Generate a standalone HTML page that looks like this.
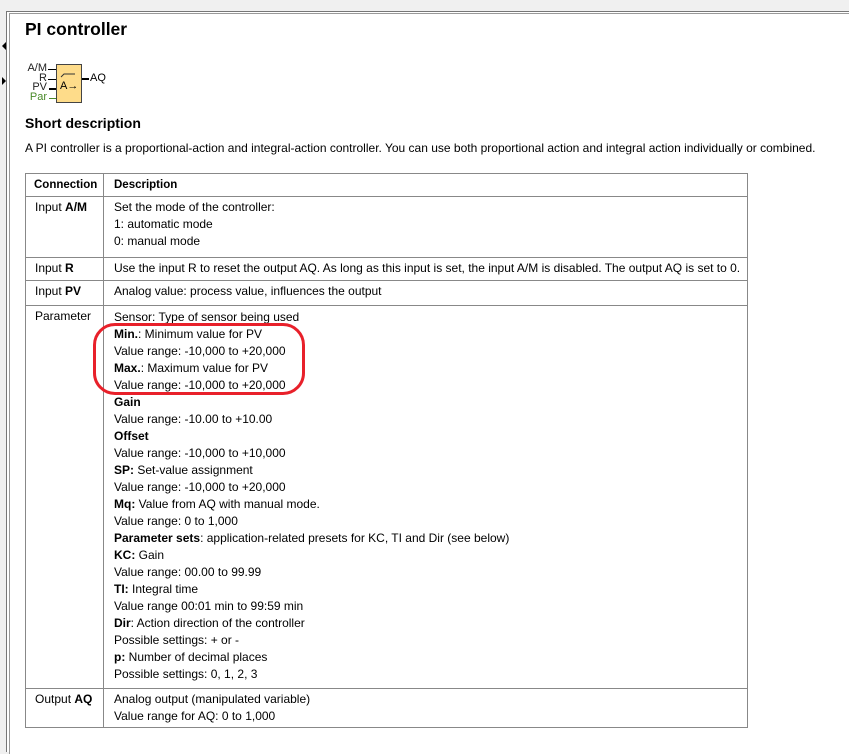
<!DOCTYPE html>
<html><head><meta charset="utf-8"><style>
body{margin:0;width:849px;height:736px;background:#f0f0f0;position:relative;overflow:hidden;font-family:"Liberation Sans",Arial,sans-serif;font-size:12px;color:#000}
#frame{position:absolute;left:6px;top:11px;width:860px;height:740px;border-left:1px solid #777;border-top:1px solid #777;background:#fff}
#inner{position:absolute;left:9px;top:13px;width:860px;height:740px;border-left:1px solid #999;border-top:1px solid #999;background:#fff}
.a{position:absolute;white-space:nowrap}
h1{position:absolute;left:25px;top:19px;margin:0;font-size:17.5px;font-weight:bold}
h2{position:absolute;left:25px;top:115px;margin:0;font-size:14px;font-weight:bold}
table{position:absolute;left:25px;top:173px;border-collapse:collapse;width:723px;table-layout:fixed}
td{border:1px solid #888;vertical-align:top;padding:2px 0 0 10px;line-height:17px;font-size:12px;white-space:nowrap;overflow:hidden}
td:first-child{padding-left:9px;padding-right:0}
th{border:1px solid #888;text-align:left;font-size:11.5px;padding:2px 0 2px 10px;line-height:17px;height:18px;white-space:nowrap}
th:first-child{padding-left:8px}
</style></head><body>
<div style="position:absolute;left:2px;top:42px;width:0;height:0;border-top:4px solid transparent;border-bottom:4px solid transparent;border-right:4px solid #000"></div>
<div style="position:absolute;left:2px;top:77px;width:0;height:0;border-top:4px solid transparent;border-bottom:4px solid transparent;border-left:4px solid #000"></div>
<div id="frame"></div><div id="inner"></div>
<h1>PI controller</h1>
<div class="a" style="left:26px;top:64px;font-size:11px;line-height:9.5px;text-align:right;width:21px;color:#222">A/M<br>R<br>PV<br><span style="color:#4a8a2a">Par</span></div>
<div class="a" style="left:48px;top:69px;width:8px;height:1px;background:#000"></div>
<div class="a" style="left:48px;top:79px;width:8px;height:1px;background:#000"></div>
<div class="a" style="left:49px;top:88px;width:7px;height:2px;background:#000"></div>
<div class="a" style="left:49px;top:98px;width:7px;height:1px;background:#4a8a2a"></div>
<div class="a" style="left:56px;top:64px;width:26px;height:39px;background:#fedc8a;border:1px solid #444;box-sizing:border-box"></div>
<svg class="a" style="left:56px;top:64px" width="26" height="39"><path d="M5 13 L8 10 L11 10 M11 10 L19 10" stroke="#333" fill="none" stroke-width="1"/><text x="4" y="25" font-size="11" font-family="Liberation Sans">A→</text></svg>
<div class="a" style="left:82px;top:78px;width:7px;height:2px;background:#000"></div>
<div class="a" style="left:90px;top:72px;font-size:11px">AQ</div>
<h2>Short description</h2>
<div class="a" style="left:25px;top:141px">A PI controller is a proportional-action and integral-action controller. You can use both proportional action and integral action individually or combined.</div>
<table>
<colgroup><col style="width:78px"><col></colgroup>
<tr><th>Connection</th><th>Description</th></tr>
<tr style="height:61px"><td>Input <b>A/M</b></td><td>Set the mode of the controller:<br>1: automatic mode<br>0: manual mode</td></tr>
<tr style="height:23px"><td>Input <b>R</b></td><td>Use the input R to reset the output AQ. As long as this input is set, the input A/M is disabled. The output AQ is set to 0.</td></tr>
<tr style="height:25px"><td>Input <b>PV</b></td><td>Analog value: process value, influences the output</td></tr>
<tr style="height:383px"><td>Parameter</td><td style="padding-top:3px">Sensor: Type of sensor being used<br><b>Min.</b>: Minimum value for PV<br>Value range: -10,000 to +20,000<br><b>Max.</b>: Maximum value for PV<br>Value range: -10,000 to +20,000<br><b>Gain</b><br>Value range: -10.00 to +10.00<br><b>Offset</b><br>Value range: -10,000 to +10,000<br><b>SP:</b> Set-value assignment<br>Value range: -10,000 to +20,000<br><b>Mq:</b> Value from AQ with manual mode.<br>Value range: 0 to 1,000<br><b>Parameter sets</b>: application-related presets for KC, TI and Dir (see below)<br><b>KC:</b> Gain<br>Value range: 00.00 to 99.99<br><b>TI:</b> Integral time<br>Value range 00:01 min to 99:59 min<br><b>Dir</b>: Action direction of the controller<br>Possible settings: + or -<br><b>p:</b> Number of decimal places<br>Possible settings: 0, 1, 2, 3</td></tr>
<tr style="height:39px"><td>Output <b>AQ</b></td><td>Analog output (manipulated variable)<br>Value range for AQ: 0 to 1,000</td></tr>
</table>
<div class="a" style="left:93px;top:323px;width:212px;height:72px;border:3px solid #e8202a;border-radius:22px;box-sizing:border-box"></div>
</body></html>
